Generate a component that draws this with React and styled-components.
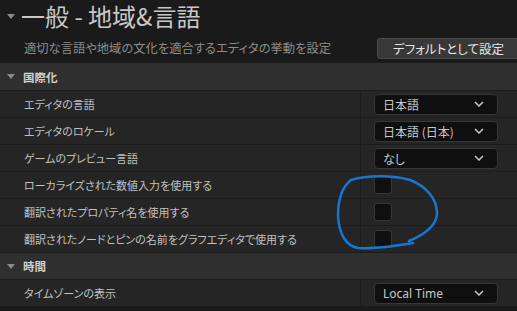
import React from 'react';
import styled, { createGlobalStyle } from 'styled-components';

const GlobalStyle = createGlobalStyle`
	html, body {
		margin: 0;
		padding: 0;
		background: #1a1a1a;
	}
	body {
		font-family: "Noto Sans CJK JP", "Noto Sans", sans-serif;
		font-feature-settings: "palt";
		overflow: hidden;
	}
`;

const Page = styled.div`
	position: relative;
	width: 517px;
	height: 311px;
	overflow: hidden;
	background: #1a1a1a;
	color: #c0c0c0;
`;

const Header = styled.header`
	height: 63px;
	display: flex;
	flex-direction: column;
`;

const TitleRow = styled.div`
	display: flex;
	align-items: center;
	height: 32px;
	padding-left: 7px;
	gap: 6px;
`;

const Title = styled.h1`
	margin: 0;
	font-size: 24px;
	font-weight: 400;
	line-height: 32px;
	color: #c8c8c8;
	font-feature-settings: normal;
	white-space: nowrap;
`;

const SubRow = styled.div`
	display: grid;
	grid-template-columns: 1fr 150px;
	align-items: center;
	margin-right: -10px;
	padding-left: 24px;
	margin-top: 6px;
`;

const Subtitle = styled.p`
	margin: 0;
	font-size: 12.3px;
	line-height: 21px;
	color: #8c8c8c;
	white-space: nowrap;
`;

const DefaultButton = styled.button`
	height: 21px;
	box-sizing: border-box;
	background: #383838;
	border: 1px solid #4a4a4a;
	border-radius: 3px;
	color: #e6e6e6;
	font-family: inherit;
	font-feature-settings: "palt";
	font-size: 12.5px;
	text-align: left;
	padding: 0 0 0 15px;
	white-space: nowrap;
`;

const Caret = styled.span`
	display: inline-block;
	width: 0;
	height: 0;
	border-left: ${p => p.$size}px solid transparent;
	border-right: ${p => p.$size}px solid transparent;
	border-top: ${p => p.$size + 1}px solid #8a8a8a;
	flex-shrink: 0;
`;

const Section = styled.div`
	display: flex;
	align-items: center;
	gap: 8px;
	height: 27px;
	box-sizing: border-box;
	padding-left: 7px;
	background: #2f2f2f;
	border-top: ${p => (p.$first ? 'none' : '1px solid #1c1c1c')};
	font-size: 11.5px;
	font-weight: 700;
	color: #d0d0d0;
`;

const Row = styled.div`
	display: grid;
	grid-template-columns: 361px 1fr;
	height: 27px;
	box-sizing: border-box;
	border-top: 1px solid #1c1c1c;
	background: #252525;
`;

const Label = styled.div`
	display: flex;
	align-items: center;
	padding-left: 24px;
	border-right: 1px solid #1c1c1c;
	font-size: 11px;
	color: #c0c0c0;
	white-space: nowrap;
`;

const Value = styled.div`
	display: flex;
	align-items: center;
	padding-left: 13px;
`;

const Select = styled.div`
	display: flex;
	align-items: center;
	justify-content: space-between;
	width: 124px;
	height: 21px;
	box-sizing: border-box;
	padding: 0 13px 0 8px;
	background: #0f0f0f;
	border: 1px solid #363636;
	border-radius: 4px;
	font-size: 12px;
	color: #c8c8c8;
	font-family: ${p => (p.$latin ? '"Noto Sans", sans-serif' : 'inherit')};
`;

const Check = styled.div`
	width: 18px;
	height: 18px;
	box-sizing: border-box;
	background: #0f0f0f;
	border: 1px solid #363636;
	border-radius: 3px;
`;

const Scribble = styled.svg`
	position: absolute;
	left: 0;
	top: 0;
	pointer-events: none;
`;

const Chevron = () => (
	<svg width="10" height="6" viewBox="0 0 10 6">
		<path d="M1 1 L5 5 L9 1" fill="none" stroke="#c8c8c8" strokeWidth="1.5" />
	</svg>
);

const rows = [
	{ label: 'エディタの言語', select: '日本語' },
	{ label: 'エディタのロケール', select: '日本語 (日本)' },
	{ label: 'ゲームのプレビュー言語', select: 'なし' },
	{ label: 'ローカライズされた数値入力を使用する' },
	{ label: '翻訳されたプロパティ名を使用する' },
	{ label: '翻訳されたノードとピンの名前をグラフエディタで使用する' },
];

const SettingRow = ({ label, select, latin }) => (
	<Row>
		<Label>{label}</Label>
		<Value>
			{select ? (
				<Select $latin={latin}>
					<span>{select}</span>
					<Chevron />
				</Select>
			) : (
				<Check />
			)}
		</Value>
	</Row>
);

export default function App() {
	return (
		<Page>
			<GlobalStyle />
			<Header>
				<TitleRow>
					<Caret $size={4} />
					<Title>一般 - 地域&amp;言語</Title>
				</TitleRow>
				<SubRow>
					<Subtitle>適切な言語や地域の文化を適合するエディタの挙動を設定</Subtitle>
					<DefaultButton>デフォルトとして設定</DefaultButton>
				</SubRow>
			</Header>
			<Section $first>
				<Caret $size={4} />
				国際化
			</Section>
			{rows.map(r => (
				<SettingRow key={r.label} {...r} />
			))}
			<Section>
				<Caret $size={4} />
				時間
			</Section>
			<SettingRow label="タイムゾーンの表示" select="Local Time" latin />
			<Scribble width="517" height="311">
				<path
					d="M413 243 C395 246 372 249 358 248 C346 246 339 234 338 216 C338 200 342 187 351 180 C366 175 394 175 410 180 C426 186 437 199 437 213 C437 227 421 236 409 241"
					fill="none"
					stroke="#1676d2"
					strokeWidth="2.5"
					strokeLinecap="round"
				/>
			</Scribble>
		</Page>
	);
}
